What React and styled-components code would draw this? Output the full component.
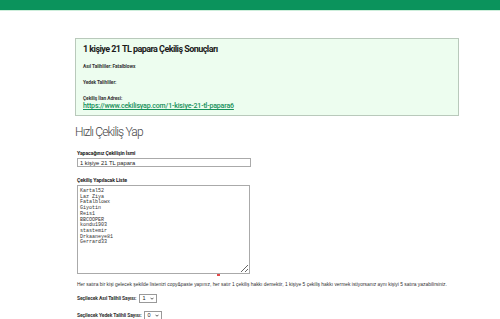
import styled, { createGlobalStyle } from "styled-components";

const GlobalStyle = createGlobalStyle`
  html, body {
    margin: 0;
    padding: 0;
    background: #fff;
  }
  body {
    font-family: "Roboto", "Liberation Sans", sans-serif;
    color: #222;
  }
`;

const TopBar = styled.div`
  height: 10px;
  background: #0b935c;
  border-bottom: 1px solid #cdeedb;
`;

const Main = styled.main`
  padding: 27px 0 0 75px;
  width: 384px;
`;

const ResultBox = styled.section`
  background: #edfdef;
  border: 1px solid #b9c9bb;
  padding: 5px 7px 6px;
  display: flex;
  flex-direction: column;
`;

const ResultTitle = styled.h2`
  margin: 0 0 10px;
  font-size: 9px;
  line-height: 10px;
  font-weight: 700;
  letter-spacing: -0.55px;
  color: #1b1b1b;
`;

const ResultLine = styled.p`
  margin: 0 0 ${(p) => p.$gap ?? 11}px;
  font-size: 4.8px;
  line-height: 5px;
  font-weight: 700;
  letter-spacing: -0.05px;
  color: #333;
`;

const ResultLink = styled.a`
  display: block;
  margin-top: 2px;
  color: #15905a;
  text-decoration: underline;
  font-size: 7px;
  line-height: 6px;
  font-weight: 500;
  letter-spacing: -0.15px;
`;

const Heading = styled.h1`
  margin: 9px 0 12px;
  font-size: 12px;
  line-height: 14px;
  font-weight: 300;
  letter-spacing: -0.85px;
  color: #444;
`;

const Field = styled.div`
  display: flex;
  flex-direction: column;
  align-items: flex-start;
  margin-left: 2px;
  margin-bottom: ${(p) => p.$gap ?? 9}px;
`;

const Label = styled.label`
  font-size: 5.2px;
  line-height: 5px;
  font-weight: 700;
  letter-spacing: -0.1px;
  color: #222;
  margin-bottom: 2px;
`;

const TextInput = styled.input`
  box-sizing: border-box;
  width: 174px;
  height: 9px;
  padding: 0 2px;
  border: 1px solid #aaa;
  font-family: "Liberation Sans", Arial, sans-serif;
  font-size: 5.8px;
  color: #222;
  outline: none;
`;

const ListArea = styled.textarea`
  box-sizing: border-box;
  width: 173px;
  height: 89px;
  padding: 3px 2px;
  border: 1px solid #aaa;
  font-family: "Liberation Mono", monospace;
  font-size: 5px;
  line-height: 5.7px;
  color: #333;
  resize: both;
  outline: none;
  overflow: hidden;
`;

const Squiggle = styled.span`
  display: block;
  width: 3px;
  height: 2px;
  margin: 0 0 0 140px;
  background: #e24a4a;
`;

const Hint = styled.p`
  margin: 5.5px 0 7px 2px;
  font-family: "Liberation Sans", Arial, sans-serif;
  font-size: 4.9px;
  line-height: 5px;
  color: #333;
  white-space: nowrap;
`;

const SelectRow = styled.div`
  display: flex;
  align-items: center;
  gap: 3px;
  margin: 0 0 ${(p) => p.$gap ?? 8}px 2px;
`;

const SelectLabel = styled.span`
  font-size: 5px;
  font-weight: 700;
  letter-spacing: -0.1px;
  color: #333;
`;

const Select = styled.div`
  box-sizing: border-box;
  width: 18px;
  height: 9px;
  border: 1px solid #999;
  display: flex;
  align-items: center;
  justify-content: space-between;
  padding: 0 2px;
  font-family: "Liberation Sans", Arial, sans-serif;
  font-size: 5.5px;
  color: #222;
  background: #fff;
`;

const names = [
  "Kartal52",
  "Laz Ziya",
  "Fatalblowx",
  "Giyotin",
  "Reis1",
  "BBCOOPER",
  "kondu1903",
  "stastemir",
  "Drkaaneye81",
  "Gerrard33",
];

const Chevron = () => (
  <svg width="4" height="3" viewBox="0 0 8 5">
    <path d="M1 1l3 3 3-3" fill="none" stroke="#333" strokeWidth="1.6" />
  </svg>
);

const App = () => {
  return (
    <>
      <GlobalStyle />
      <TopBar />
      <Main>
        <ResultBox>
          <ResultTitle>1 kişiye 21 TL papara Çekiliş Sonuçları</ResultTitle>
          <ResultLine>Asıl Talihliler: Fatalblowx</ResultLine>
          <ResultLine>Yedek Talihliler:</ResultLine>
          <ResultLine $gap={0}>
            Çekiliş İlan Adresi:
            <ResultLink href="#">
              https://www.cekilisyap.com/1-kisiye-21-tl-papara6
            </ResultLink>
          </ResultLine>
        </ResultBox>

        <Heading>Hızlı Çekiliş Yap</Heading>

        <Field $gap={11}>
          <Label>Yapacağınız Çekilişin İsmi</Label>
          <TextInput defaultValue="1 kişiye 21 TL papara" />
        </Field>

        <Field $gap={0}>
          <Label>Çekiliş Yapılacak Liste</Label>
          <ListArea defaultValue={names.join("\n")} />
          <Squiggle />
        </Field>

        <Hint>
          Her satıra bir kişi gelecek şekilde listenizi copy&amp;paste yapınız,
          her satır 1 çekiliş hakkı demektir, 1 kişiye 5 çekiliş hakkı vermek
          istiyorsanız aynı kişiyi 5 satıra yazabilirsiniz.
        </Hint>

        <SelectRow>
          <SelectLabel>Seçilecek Asıl Talihli Sayısı:</SelectLabel>
          <Select>
            1 <Chevron />
          </Select>
        </SelectRow>
        <SelectRow>
          <SelectLabel>Seçilecek Yedek Talihli Sayısı:</SelectLabel>
          <Select>
            0 <Chevron />
          </Select>
        </SelectRow>
      </Main>
    </>
  );
};

export default App;
